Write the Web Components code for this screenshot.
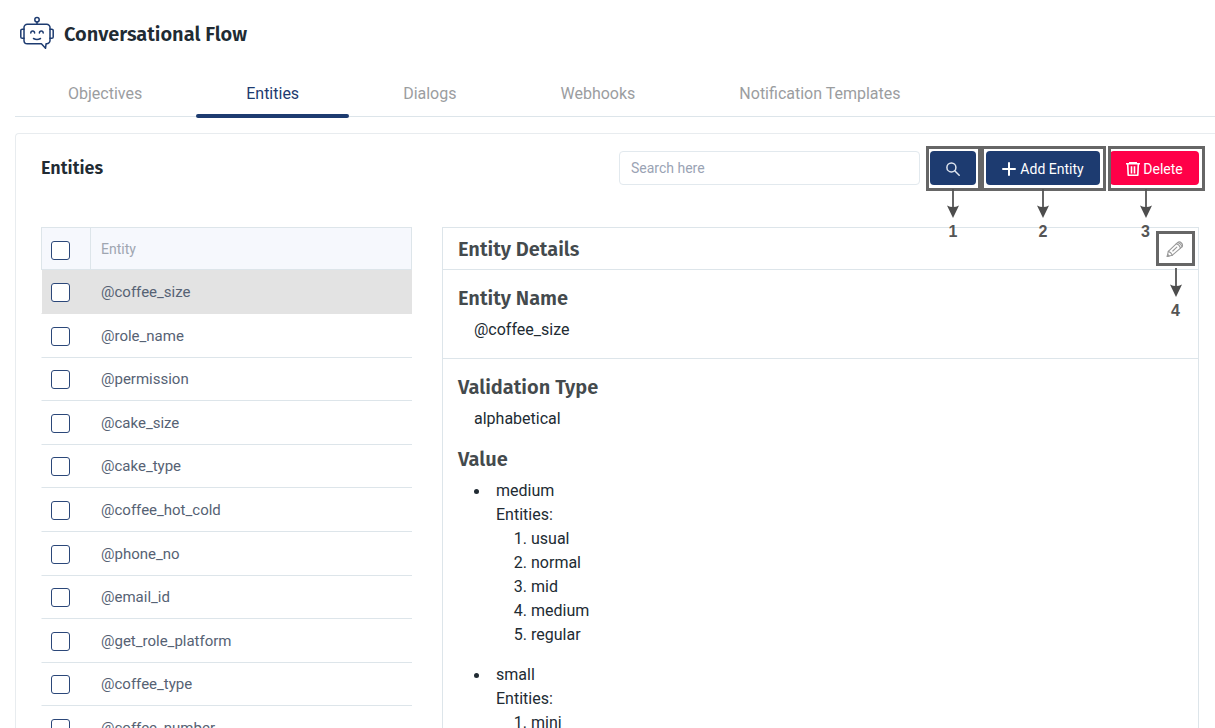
<!DOCTYPE html>
<html lang="en">
<head>
<meta charset="utf-8">
<meta name="viewport" content="width=device-width, initial-scale=1">
<title>Conversational Flow</title>
<style>
  :root {
    --navy: #1d3b70;
    --red: #ff0048;
    --line: #dde5ea;
    --ink: #212b33;
    --heading: "Fira Sans", "Noto Sans", sans-serif;
  }
  html { overflow: hidden; }
  body { margin: 0; background: #fff; color: var(--ink); font: 16px/24px Roboto, sans-serif; }
</style>
</head>
<body>
<flow-app></flow-app>

<script>
const define = (name, html, setup) => customElements.define(name, class extends HTMLElement {
  constructor() {
    super();
    const tpl = document.createElement('template');
    tpl.innerHTML = '<style>*{box-sizing:border-box}</style>' + html;
    this.attachShadow({ mode: 'open' }).append(tpl.content.cloneNode(true));
  }
  connectedCallback() { if (setup) setup(this, this.shadowRoot); }
});

/* Page title with the robot logo */
define('flow-header', `
<style>
  :host { display: flex; align-items: flex-start; gap: 10px; padding: 16px 20px 0; }
  h1 { margin: 0; font: 600 20px/37px var(--heading); }
  svg { flex: none; }
</style>
<svg width="34" height="34" viewBox="0 0 34 34" fill="none" stroke="#1d3b70" stroke-width="1.500" stroke-linecap="round" stroke-linejoin="round" aria-hidden="true">
  <circle cx="17" cy="3.800" r="2.200"/><path d="M17 6v2.200"/>
  <path d="M7.300 8.200h19.400a3.300 3.300 0 0 1 3.300 3.300v12.900a3.300 3.300 0 0 1-3.300 3.300h-.6l-.6 4.600-4.100-4.600H7.300A3.300 3.300 0 0 1 4 24.400V11.500a3.300 3.300 0 0 1 3.300-3.300z"/>
  <path d="M4 13.200H2.200a1.400 1.400 0 0 0-1.400 1.400v6.300a1.400 1.400 0 0 0 1.400 1.400H4M30 13.200h1.800a1.400 1.400 0 0 1 1.400 1.400v6.300a1.400 1.400 0 0 1-1.400 1.400H30"/>
  <path d="M10.800 17q.1-1.900 1.900-1.900t1.900 1.900M19.400 17q.1-1.900 1.900-1.900t1.900 1.900M13.500 22.500q3.500 2 7 0"/>
</svg>
<h1><slot></slot></h1>`);

/* Tab strip and a single tab */
define('flow-tabs', `
<style>
  :host { display: block; margin: 16px 0 0 15px; border-bottom: 1px solid var(--line); }
  nav { display: flex; gap: 4px; padding-left: 3px; height: 47px; }
</style>
<nav aria-label="Sections"><slot></slot></nav>`);

define('flow-tab', `
<style>
  :host { display: block; position: relative; }
  a { display: block; padding: 13px 50px 10px; color: #9b9d9f; text-decoration: none; white-space: nowrap; }
  :host([active]) a { color: var(--navy); }
  :host([active])::after { content: ""; position: absolute; left: 0; right: 0; bottom: -2px; height: 4px; border-radius: 2px; background: var(--navy); }
</style>
<a href="#"><slot></slot></a>`);

/* Numbered annotation: a frame around the slotted control, an arrow and a number */
define('callout-mark', `
<style>
  :host { display: block; position: relative; }
  .frame { position: absolute; inset: var(--inset, -5px); border: 3px solid #666; pointer-events: none; }
  .note { position: absolute; z-index: 1; top: calc(100% + 4px); left: 50%; width: 16px; margin-left: var(--shift, -8px); text-align: center; color: #555; font: bold 16px/20px "Liberation Sans", Arial, sans-serif; pointer-events: none; }
  svg { display: block; margin-bottom: 4px; }
</style>
<slot></slot>
<div class="frame"></div>
<div class="note">
  <svg width="16" height="29" viewBox="0 0 16 29" aria-hidden="true"><path d="M8 0v20" stroke="#555" stroke-width="1.800"/><path d="M2 16.500q6 3 12 0L8 29z" fill="#4d4d4d"/></svg>
  <span></span>
</div>`, (el, root) => { root.querySelector('span').textContent = el.getAttribute('number'); });

define('flow-button', `
<style>
  :host { display: block; }
  button { display: flex; align-items: center; justify-content: center; gap: 4px; width: 100%; height: 34px; padding: 1px 0 0; border: 0; border-radius: 4px; background: var(--navy); color: #fff; font: 14px/20px Roboto, sans-serif; white-space: nowrap; }
  :host([kind=danger]) button { background: var(--red); gap: 3px; }
  ::slotted(svg) { flex: none; }
</style>
<button type="button"><slot name="icon"></slot><slot></slot></button>`, (el, root) => {
  if (el.title) root.querySelector('button').setAttribute('aria-label', el.title);
});

define('entity-toolbar', `
<style>
  :host { display: flex; align-items: flex-start; }
  h2 { margin: 0 auto 0 0; font: 600 18px/35px var(--heading); }
  input { flex: 0 1 301px; min-width: 0; height: 34px; margin: 0 10px 0 0; padding: 0 11px; border: 1px solid #e2e9ee; border-radius: 4px; outline: 0; color: inherit; font: 14px/20px Roboto, sans-serif; }
  input::placeholder { color: #9aa3b4; opacity: 1; }
  .search { width: 46px; margin-right: 10px; --inset: -5px -5px -6px -4px; }
  .add { width: 114px; margin-right: 10px; --inset: -5px -6px -6px -5px; }
  .del { width: 89px; --inset: -5px -6px -6px -2px; --shift: -17px; }
  svg { display: block; }
</style>
<h2>Entities</h2>
<input type="search" placeholder="Search here" aria-label="Search here">
<callout-mark class="search" number="1"><flow-button title="Search">
  <svg slot="icon" width="14" height="14" viewBox="0 0 14 14" fill="none" stroke="#dfe5ef" stroke-width="1.500" stroke-linecap="round"><circle cx="5.400" cy="5.400" r="4.500"/><path d="M8.700 8.700l4.500 4.500"/></svg>
</flow-button></callout-mark>
<callout-mark class="add" number="2"><flow-button>
  <svg slot="icon" width="14" height="14" viewBox="0 0 14 14" stroke="#fff" stroke-width="2" stroke-linecap="round"><path d="M7 1v12M1 7h12"/></svg>Add Entity
</flow-button></callout-mark>
<callout-mark class="del" number="3"><flow-button kind="danger">
  <svg slot="icon" width="14" height="14" viewBox="0 0 14 14" fill="none" stroke="#fff" stroke-width="1.600" stroke-linejoin="round"><path d="M0 1.800h14M3.800 1.500V.5h6.400v1M1.700 2l.5 11.200h9.600L12.300 2M5.500 4.200v7.200M8.500 4.200v7.200"/></svg>Delete
</flow-button></callout-mark>`);

/* Table of entities with a tick box in each row */
define('entity-table', `
<style>
  :host { display: block; }
  table { width: 100%; border-collapse: separate; border-spacing: 0; table-layout: fixed; font-size: 15px; line-height: 20px; }
  col.tick { width: 50px; }
  th, td { height: 44px; padding: 0 0 0 10px; text-align: left; font-weight: 400; border-bottom: 1px solid var(--line); }
  tbody tr:nth-child(5n+3) td, tbody tr:nth-child(5n+5) td { height: 43px; }
  thead th { height: 43px; background: #f6f8fd; color: #9fa6b1; border: 1px solid var(--line); font-size: 14px; }
  thead th + th { border-left: 0; }
  td { color: #566274; }
  tr.on td { background: #e3e3e3; border-color: #e3e3e3; }
  tbody tr td:first-child { border-left: 1px solid #fff; padding-left: 9px; }
  input { appearance: none; display: block; width: 19px; height: 19px; margin: 1px 0 0; border: 1px solid #2b4779; border-radius: 3px; background: #fff; }
  th:first-child { padding-left: 9px; }
  th input { margin-top: 3px; }
</style>
<table>
  <colgroup><col class="tick"><col></colgroup>
  <thead><tr><th><input type="checkbox" aria-label="Select all"></th><th>Entity</th></tr></thead>
  <tbody></tbody>
</table>`, (el, root) => {
  root.querySelector('tbody').innerHTML = el.getAttribute('items').split(' ').map((n, i) =>
    `<tr${i ? '' : ' class="on"'}><td><input type="checkbox" id="e${i}"></td><td><label for="e${i}">@${n}</label></td></tr>`).join('');
});

define('detail-section', `
<style>
  :host { display: block; padding: 0 15px; }
  h3 { margin: 0; color: #444a4d; font: 600 20px/26px var(--heading); }
  .body { padding: 7px 16px 0; }
</style>
<h3></h3><div class="body"><slot></slot></div>`, (el, root) => { root.querySelector('h3').textContent = el.getAttribute('heading'); });

define('entity-details', `
<style>
  :host { display: block; border: 1px solid var(--line); }
  header { display: flex; align-items: center; justify-content: space-between; height: 42px; padding: 0 6px 0 15px; border-bottom: 1px solid var(--line); }
  h3 { margin: 0; color: #444a4d; font: 600 20px/26px var(--heading); }
  callout-mark { width: 33px; height: 31px; --inset: -2px -3px; }
  button { display: grid; place-items: center; width: 31px; height: 31px; padding: 1px 0 0; border: 0; background: none; }
  .name, .type, .value { padding-top: 15px; }
  .name { padding-bottom: 16px; border-bottom: 1px solid var(--line); }
  ul { margin: 0; padding: 0 0 0 22px; list-style: none; }
  ul > li { position: relative; margin-bottom: 16px; }
  ul > li::before { content: ""; position: absolute; left: -22px; top: 10px; width: 5px; height: 5px; border-radius: 50%; background: currentColor; }
  ol { margin: 0; padding: 0 0 0 35px; }
</style>
<header>
  <h3>Entity Details</h3>
  <callout-mark number="4"><button type="button" aria-label="Edit entity">
    <svg width="18" height="18" viewBox="0 0 18 18" fill="none" stroke="#999" stroke-width="1.100" stroke-linejoin="round" stroke-linecap="round"><path d="M1.200 16.500l1.100-5.100L11.500 2.600q2-1.500 3.900.4t.6 3.900L6.400 15.200z"/><path d="M2.300 11.400q2.800.8 4.100 3.800M10.300 3.700q3 .8 4.200 4.300M12 2.500q3 1 4 4.200M6.800 11l4-3.800M1.200 16.500l2-.5-1.500-1.500z"/></svg>
  </button></callout-mark>
</header>
<detail-section class="name" heading="Entity Name">@coffee_size</detail-section>
<detail-section class="type" heading="Validation Type">alphabetical</detail-section>
<detail-section class="value" heading="Value">
  <ul>
    <li>medium<div>Entities:</div><ol><li>usual</li><li>normal</li><li>mid</li><li>medium</li><li>regular</li></ol></li>
    <li>small<div>Entities:</div><ol><li>mini</li><li>little</li></ol></li>
  </ul>
</detail-section>`);

define('flow-app', `
<style>
  :host { display: block; }
  section { margin: 16px 0 0 15px; padding: 17px 16px 26px 25px; border: 1px solid #e8ecef; border-right: 0; border-radius: 4px 0 0 0; }
  .columns { display: grid; grid-template-columns: minmax(0, 371fr) minmax(0, 757fr); gap: 30px; align-items: start; margin-top: 41px; }
</style>
<flow-header>Conversational Flow</flow-header>
<flow-tabs>
  <flow-tab>Objectives</flow-tab><flow-tab active>Entities</flow-tab><flow-tab>Dialogs</flow-tab><flow-tab>Webhooks</flow-tab><flow-tab>Notification Templates</flow-tab>
</flow-tabs>
<section>
  <entity-toolbar></entity-toolbar>
  <div class="columns">
    <entity-table items="coffee_size role_name permission cake_size cake_type coffee_hot_cold phone_no email_id get_role_platform coffee_type coffee_number"></entity-table>
    <entity-details></entity-details>
  </div>
</section>`);
</script>
</body>
</html>
